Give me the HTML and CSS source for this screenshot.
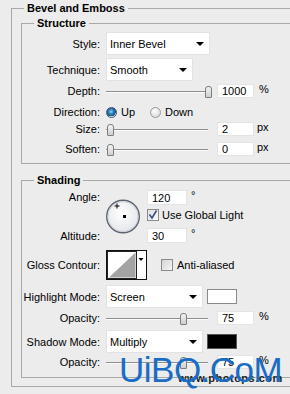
FILE: index.html
```html
<!DOCTYPE html>
<html>
<head>
<meta charset="utf-8">
<link rel="stylesheet" href="styles.css">
</head>
<body>
<div class="panel">
  <fieldset class="outer">
    <legend class="legend-outer">Bevel and Emboss</legend>

    <fieldset class="group structure">
      <legend class="legend-inner">Structure</legend>

      <div class="row h23">
        <span class="label">Style:</span>
        <div class="select w104"><span>Inner Bevel</span><i class="arrow"></i></div>
      </div>
      <div class="row h23 g3">
        <span class="label">Technique:</span>
        <div class="select w87"><span>Smooth</span><i class="arrow"></i></div>
      </div>
      <div class="row h14 g3">
        <span class="label">Depth:</span>
        <div class="ctl">
          <div class="slider"><i class="thumb" style="left:99px"></i></div>
          <span class="input w37">1000</span><span class="unit">%</span>
        </div>
      </div>
      <div class="row h14 g7">
        <span class="label">Direction:</span>
        <div class="ctl">
          <span class="radio on"></span><span class="rtext">Up</span>
          <span class="radio down"></span><span class="rtext">Down</span>
        </div>
      </div>
      <div class="row h14 g3">
        <span class="label">Size:</span>
        <div class="ctl">
          <div class="slider"><i class="thumb" style="left:1px"></i></div>
          <span class="input w37">2</span><span class="unit px">px</span>
        </div>
      </div>
      <div class="row h14 g6">
        <span class="label">Soften:</span>
        <div class="ctl">
          <div class="slider"><i class="thumb" style="left:1px"></i></div>
          <span class="input w37">0</span><span class="unit px">px</span>
        </div>
      </div>
    </fieldset>

    <fieldset class="group shading">
      <legend class="legend-inner">Shading</legend>

      <div class="angle-block">
        <div class="angle-labels"><span>Angle:</span><span>Altitude:</span></div>
        <div class="dial">
          <svg width="36" height="35" viewBox="0 0 36 35">
            <defs>
              <radialGradient id="dg" cx="0.45" cy="0.4" r="0.6">
                <stop offset="0" stop-color="#ffffff"/>
                <stop offset="1" stop-color="#e4e6ea"/>
              </radialGradient>
            </defs>
            <circle cx="18" cy="17.5" r="16.3" fill="url(#dg)" stroke="#5c6470" stroke-width="1.4"/>
            <circle cx="18" cy="17.5" r="15" fill="none" stroke="#c8ccd2" stroke-width="0.8"/>
            <path d="M12 4.5v5M9.5 7h5" stroke="#000" stroke-width="1"/>
            <rect x="18" y="16" width="3" height="3" fill="#000"/>
          </svg>
        </div>
        <div class="angle-fields">
          <div class="fline"><span class="input w40 h15">120</span><span class="deg">°</span></div>
          <div class="cline">
            <span class="checkbox">
              <svg width="12" height="12" viewBox="0 0 12 12"><path d="M2.5 5.5l2.5 3.5 4.5-7.5" fill="none" stroke="#3b4f86" stroke-width="1.6"/></svg>
            </span>
            <span>Use Global Light</span>
          </div>
          <div class="fline"><span class="input w40 h15">30</span><span class="deg">°</span></div>
        </div>
      </div>

      <div class="row h29 g6">
        <span class="label">Gloss Contour:</span>
        <div class="ctl">
          <div class="contour">
            <svg width="41" height="30" viewBox="0 0 41 30">
              <rect x="0.5" y="0.5" width="40" height="29" fill="#fff" stroke="#111"/>
              <rect x="1.5" y="1.5" width="29" height="27" fill="none" stroke="#222"/>
              <polygon points="3,27.5 29.5,27.5 29.5,2.5" fill="#a3a3a3"/>
              <polygon points="32.5,8 37.5,8 35,11" fill="#000"/>
            </svg>
          </div>
          <span class="checkbox empty ml14"></span><span class="ctext">Anti-aliased</span>
        </div>
      </div>

      <div class="row h23 g6">
        <span class="label">Highlight Mode:</span>
        <div class="ctl">
          <div class="select w97"><span>Screen</span><i class="arrow"></i></div>
          <span class="swatch white"></span>
        </div>
      </div>
      <div class="row h14 g3">
        <span class="label">Opacity:</span>
        <div class="ctl">
          <div class="slider"><i class="thumb" style="left:74px"></i></div>
          <span class="input w37">75</span><span class="unit">%</span>
        </div>
      </div>
      <div class="row h23 g5">
        <span class="label">Shadow Mode:</span>
        <div class="ctl">
          <div class="select w97"><span>Multiply</span><i class="arrow"></i></div>
          <span class="swatch black"></span>
        </div>
      </div>
      <div class="row h14 g2">
        <span class="label">Opacity:</span>
        <div class="ctl">
          <div class="slider"><i class="thumb" style="left:74px"></i></div>
          <span class="input w37">75</span><span class="unit">%</span>
        </div>
      </div>
    </fieldset>
  </fieldset>
</div>

<div class="site">www.photops.com</div>
<div class="watermark">UiBQ.CoM</div>
</body>
</html>
```

FILE: styles.css
```css
html, body {
  margin: 0;
  padding: 0;
}
body {
  width: 290px;
  height: 394px;
  overflow: hidden;
  position: relative;
  background: #ececec;
  font-family: "Liberation Sans", Arial, sans-serif;
  font-size: 11px;
  color: #000;
}
.panel {
  padding: 2px 0 0 11px;
}
fieldset {
  margin: 0;
  min-width: 0;
  border: 1px solid #a9a9a9;
}
.outer {
  width: 320px;
  padding: 0 0 8px 9px;
  border-right: none;
}
legend {
  font-weight: bold;
  font-size: 11px;
  line-height: 12px;
  padding: 0 3px;
  color: #000;
}
.legend-outer {
  margin-left: 3px;
}
.legend-inner {
  margin-left: 12px;
}
.group {
  padding: 0;
  border-right: none;
}
.structure {
  margin-top: 3px;
  padding: 3px 0 7px 0;
}
.shading {
  margin-top: 10px;
  padding: 4px 0 8px 0;
}
.row {
  display: grid;
  grid-template-columns: 78px auto;
  column-gap: 6px;
  align-items: center;
}
.h23 { height: 23px; }
.h14 { height: 14px; }
.h29 { height: 29px; }
.g2 { margin-top: 2px; }
.g3 { margin-top: 3px; }
.g5 { margin-top: 5px; }
.g6 { margin-top: 6px; }
.g7 { margin-top: 7px; }
.label {
  text-align: right;
  white-space: nowrap;
}
.ctl {
  display: flex;
  align-items: center;
  height: 100%;
}
.select {
  height: 23px;
  box-sizing: border-box;
  background: #fff;
  border: 1px solid #e2e2e2;
  display: flex;
  align-items: center;
  justify-content: space-between;
  padding: 0 5px 0 3px;
}
.w104 { width: 104px; }
.w87 { width: 87px; }
.w97 { width: 97px; }
.arrow {
  width: 0;
  height: 0;
  border-left: 4px solid transparent;
  border-right: 4px solid transparent;
  border-top: 4px solid #000;
  margin-top: 1px;
}
.slider {
  position: relative;
  width: 104px;
  height: 14px;
  flex: none;
}
.slider::before {
  content: "";
  position: absolute;
  left: 0;
  right: 2px;
  top: 7px;
  border-top: 1px solid #8e8e8e;
  border-bottom: 1px solid #fbfbfb;
}
.thumb {
  position: absolute;
  top: 2px;
  width: 5px;
  height: 10px;
  background: linear-gradient(#f4f4f4, #cfcfcf);
  border: 1px solid #7d7d7d;
  border-radius: 3px 3px 1px 1px;
}
.input {
  box-sizing: border-box;
  height: 14px;
  background: #fff;
  border: 1px solid #e4e4e4;
  padding-left: 4px;
  display: flex;
  align-items: center;
  line-height: 12px;
}
.w37 {
  width: 37px;
  margin-left: 7px;
}
.w40 { width: 40px; }
.h15 { height: 15px; }
.unit {
  margin-left: 5px;
  align-self: flex-start;
  margin-top: -1px;
}
.unit.px { margin-left: 3px; }
.radio {
  width: 11px;
  height: 11px;
  box-sizing: border-box;
  border-radius: 50%;
  flex: none;
}
.radio.on {
  border: 1px solid #3e566e;
  background: radial-gradient(circle at 45% 40%, #8fd0f0 0, #2b7fb4 35%, #1c4f80 62%, #e8eef4 68%);
}
.radio.down {
  border: 1px solid #9a9a9a;
  background: radial-gradient(circle at 40% 35%, #ffffff 0, #d9d9d9 80%);
  margin-left: 0;
}
.rtext {
  margin-left: 4px;
  width: 29px;
}
.rtext + .radio.down { margin-left: 0; }
.angle-block {
  display: flex;
  height: 54px;
}
.angle-labels {
  width: 78px;
  display: flex;
  flex-direction: column;
  justify-content: space-between;
  align-items: flex-end;
  padding: 1px 0 2px;
  box-sizing: border-box;
}
.dial {
  margin-left: 5px;
  margin-top: 9px;
  width: 36px;
  height: 35px;
}
.dial svg { display: block; }
.angle-fields {
  margin-left: 6px;
  display: flex;
  flex-direction: column;
}
.fline {
  display: flex;
  height: 15px;
}
.deg {
  margin-left: 4px;
  line-height: 10px;
}
.cline {
  display: flex;
  align-items: center;
  height: 14px;
  margin-top: 3px;
  margin-bottom: 6px;
}
.checkbox {
  width: 12px;
  height: 12px;
  box-sizing: border-box;
  border: 1px solid #8b8b8b;
  background: linear-gradient(135deg, #e0e0e0, #fafafa);
  flex: none;
  margin-right: 3px;
}
.checkbox svg {
  display: block;
  margin: -1px;
}
.checkbox.empty {
  background: linear-gradient(135deg, #d4d4d4, #f6f6f6);
}
.ml14 { margin-left: 14px; }
.ctext { margin-left: 1px; }
.contour {
  width: 41px;
  height: 30px;
}
.contour svg { display: block; }
.swatch {
  width: 30px;
  height: 15px;
  box-sizing: border-box;
  margin-left: 4px;
  flex: none;
}
.swatch.white {
  background: #fff;
  border: 1px solid #8a8a8a;
}
.swatch.black {
  background: #000;
  border: 1px solid #555;
}
.site {
  position: absolute;
  left: 178px;
  top: 372px;
  font-size: 11px;
  font-weight: bold;
  color: #222;
  letter-spacing: 0.5px;
}
.watermark {
  position: absolute;
  left: 119px;
  top: 350px;
  font-family: "Liberation Sans", Arial, sans-serif;
  font-size: 35px;
  line-height: 40px;
  color: #1a6cc4;
  letter-spacing: -0.5px;
}
```
